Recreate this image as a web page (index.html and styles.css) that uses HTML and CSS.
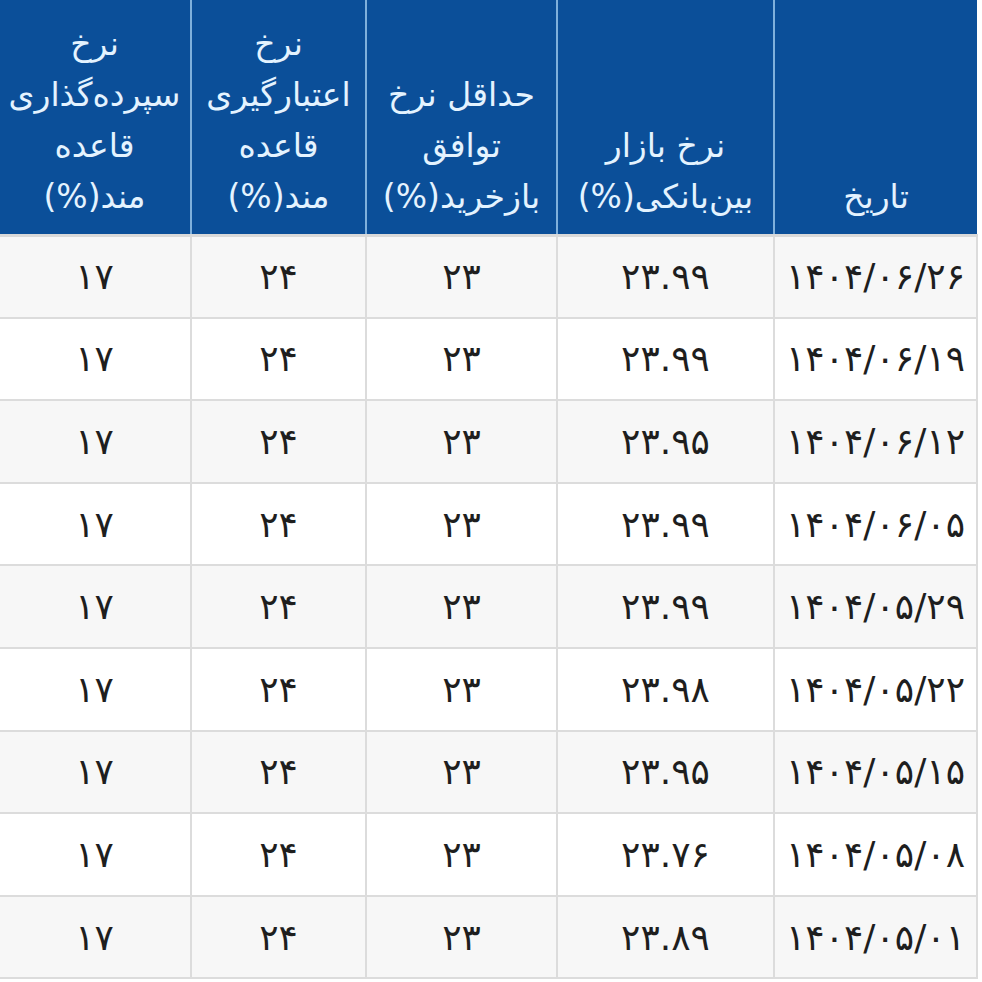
FILE: index.html
```
<!DOCTYPE html>
<html lang="fa" dir="rtl">
<head>
<meta charset="utf-8">
<link rel="stylesheet" href="styles.css">
</head>
<body>
<table class="rates">
  <colgroup>
    <col class="c-date">
    <col class="c-inter">
    <col class="c-repo">
    <col class="c-credit">
    <col class="c-deposit">
  </colgroup>
  <thead>
    <tr>
      <th>تاریخ</th>
      <th>نرخ بازار بین‌بانکی(%)</th>
      <th>حداقل نرخ توافق بازخرید(%)</th>
      <th>نرخ اعتبارگیری قاعده مند(%)</th>
      <th>نرخ سپرده‌گذاری قاعده مند(%)</th>
    </tr>
  </thead>
  <tbody>
    <tr><td>۱۴۰۴/۰۶/۲۶</td><td>۲۳.۹۹</td><td>۲۳</td><td>۲۴</td><td>۱۷</td></tr>
    <tr><td>۱۴۰۴/۰۶/۱۹</td><td>۲۳.۹۹</td><td>۲۳</td><td>۲۴</td><td>۱۷</td></tr>
    <tr><td>۱۴۰۴/۰۶/۱۲</td><td>۲۳.۹۵</td><td>۲۳</td><td>۲۴</td><td>۱۷</td></tr>
    <tr><td>۱۴۰۴/۰۶/۰۵</td><td>۲۳.۹۹</td><td>۲۳</td><td>۲۴</td><td>۱۷</td></tr>
    <tr><td>۱۴۰۴/۰۵/۲۹</td><td>۲۳.۹۹</td><td>۲۳</td><td>۲۴</td><td>۱۷</td></tr>
    <tr><td>۱۴۰۴/۰۵/۲۲</td><td>۲۳.۹۸</td><td>۲۳</td><td>۲۴</td><td>۱۷</td></tr>
    <tr><td>۱۴۰۴/۰۵/۱۵</td><td>۲۳.۹۵</td><td>۲۳</td><td>۲۴</td><td>۱۷</td></tr>
    <tr><td>۱۴۰۴/۰۵/۰۸</td><td>۲۳.۷۶</td><td>۲۳</td><td>۲۴</td><td>۱۷</td></tr>
    <tr><td>۱۴۰۴/۰۵/۰۱</td><td>۲۳.۸۹</td><td>۲۳</td><td>۲۴</td><td>۱۷</td></tr>
  </tbody>
</table>
</body>
</html>
```
FILE: styles.css
```
html, body {
  margin: 0;
  padding: 0;
  background: #ffffff;
}
body {
  font-family: "DejaVu Sans", "Noto Sans", sans-serif;
  overflow: hidden;
}
.rates {
  border-collapse: collapse;
  table-layout: fixed;
  width: 978px;
  margin: 0 4px 0 0;
}
.c-date { width: 203px; }
.c-inter { width: 217px; }
.c-repo { width: 191px; }
.c-credit { width: 175px; }
.c-deposit { width: 192px; }

.rates th {
  background: #0b4f99;
  color: #e4f3ff;
  font-weight: normal;
  font-size: 33px;
  line-height: 51px;
  height: 235px;
  box-sizing: border-box;
  padding: 0 4px 12px;
  vertical-align: bottom;
  text-align: center;
  border-left: 2px solid #7fb0dc;
  border-bottom: 3px solid #d9d9d9;
}
.rates th:last-child {
  border-left: none;
}
.rates td {
  height: 82.6px;
  box-sizing: border-box;
  font-size: 36px;
  color: #1e1e1e;
  text-align: center;
  vertical-align: middle;
  border: 2px solid #dcdcdc;
  border-top: none;
  padding: 0;
}
.rates tbody tr:nth-child(odd) td {
  background: #f7f7f7;
}
.rates tbody tr:nth-child(even) td {
  background: #ffffff;
}
.rates td:last-child {
  border-left: none;
}
```
